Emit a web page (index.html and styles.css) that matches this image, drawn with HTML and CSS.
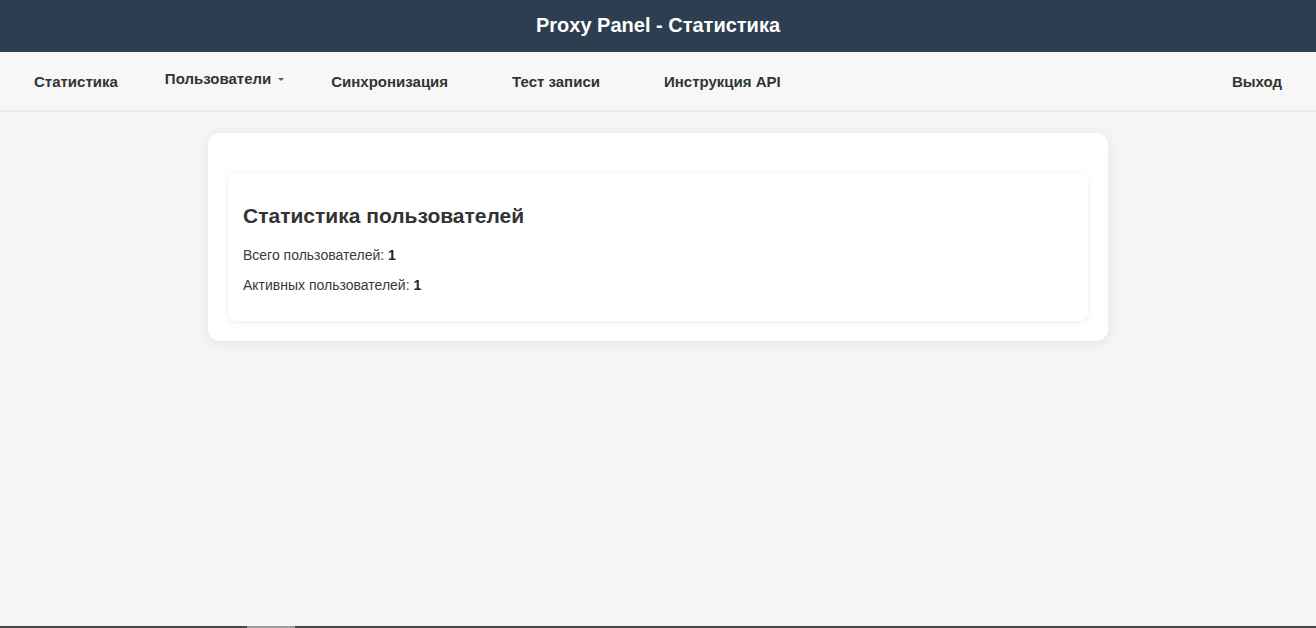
FILE: index.html
```html
<!DOCTYPE html>
<html lang="ru">
<head>
<meta charset="utf-8">
<title>Proxy Panel - Статистика</title>
<link rel="stylesheet" href="styles.css">
</head>
<body>
<header class="topbar">
  <h1 class="title">Proxy Panel - Статистика</h1>
</header>
<nav class="nav">
  <div class="nav-left">
    <a class="nav-link" href="#">Статистика</a>
    <div class="dropdown">
      <button class="dropdown-btn" type="button">Пользователи <span class="caret"></span></button>
    </div>
    <a class="nav-link" href="#">Синхронизация</a>
    <a class="nav-link" href="#">Тест записи</a>
    <a class="nav-link" href="#">Инструкция API</a>
  </div>
  <a class="nav-link" href="#">Выход</a>
</nav>
<main class="main">
  <section class="container">
    <div class="spacer"></div>
    <div class="card">
      <h2 class="card-title">Статистика пользователей</h2>
      <p class="stat">Всего пользователей: <strong>1</strong></p>
      <p class="stat">Активных пользователей: <strong>1</strong></p>
    </div>
  </section>
</main>
<div class="scrollbar"><div class="thumb"></div></div>
</body>
</html>
```

FILE: styles.css
```css
html, body {
  margin: 0;
  padding: 0;
}
body {
  font-family: "Liberation Sans", Arial, sans-serif;
  background: #f4f5f7;
  color: #333;
  min-height: 628px;
}
.topbar {
  background: #2c3e50;
  height: 52px;
  display: flex;
  align-items: center;
  justify-content: center;
}
.title {
  margin: 0 0 3px;
  color: #fff;
  font-size: 20px;
  font-weight: bold;
  line-height: 24px;
}
.nav {
  background: #f7f7f7;
  height: 58px;
  border-bottom: 2px solid #ebebeb;
  display: flex;
  align-items: center;
  justify-content: space-between;
  padding: 0 10px;
}
.nav-left {
  display: flex;
  align-items: center;
  gap: 16px;
}
.nav-link {
  padding: 0 24px;
  color: #333;
  font-weight: bold;
  font-size: 15px;
  text-decoration: none;
  line-height: 20px;
  position: relative;
  top: 1px;
}
.dropdown-btn {
  background: none;
  border: 0;
  padding: 0 7px;
  margin: 0;
  font-family: inherit;
  font-size: 15px;
  font-weight: bold;
  color: #333;
  line-height: 20px;
  position: relative;
  top: -2px;
  display: flex;
  align-items: center;
}
.caret {
  display: inline-block;
  width: 0;
  height: 0;
  margin-left: 7px;
  border-left: 3px solid transparent;
  border-right: 3px solid transparent;
  border-top: 3px solid #555;
}
.main {
  padding-top: 21px;
  display: flex;
  justify-content: center;
}
.container {
  width: 900px;
  box-sizing: border-box;
  background: #fff;
  border-radius: 12px;
  box-shadow: 0 2px 12px rgba(0, 0, 0, 0.08);
  padding: 20px;
}
.spacer {
  height: 20px;
}
.card {
  background: #fff;
  border-radius: 8px;
  box-shadow: 0 1px 6px rgba(0, 0, 0, 0.08);
  padding: 15px;
  height: 148px;
  box-sizing: border-box;
}
.card-title {
  margin: 15px 0 19px;
  font-size: 21px;
  line-height: 25px;
  font-weight: bold;
  color: #333;
}
.stat {
  margin: 0 0 14px;
  font-size: 14px;
  line-height: 16px;
  color: #3a3a3a;
}
.stat strong {
  color: #222;
}
.scrollbar {
  position: fixed;
  left: 0;
  right: 0;
  bottom: 0;
  height: 2px;
  background: #4a4a4a;
}
.thumb {
  margin-left: 247px;
  width: 48px;
  height: 2px;
  background: #9a9a9a;
}
```
